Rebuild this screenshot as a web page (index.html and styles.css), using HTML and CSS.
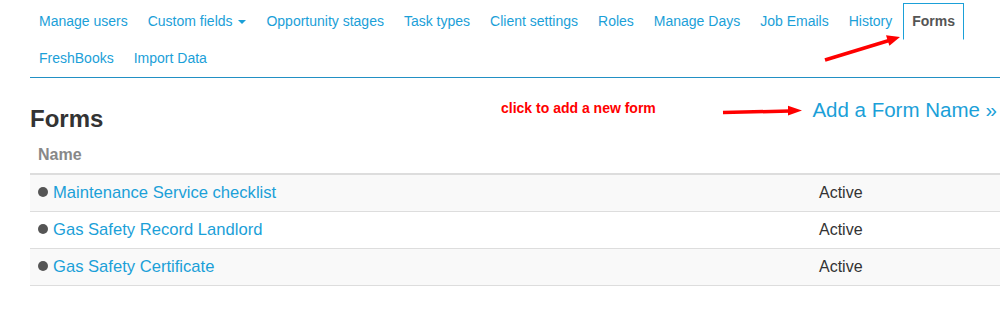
FILE: index.html
```html
<!DOCTYPE html>
<html lang="en">
<head>
    <meta charset="UTF-8">
    <meta name="viewport" content="width=device-width, initial-scale=1.0">
    <title>Forms</title>
    <link rel="stylesheet" href="styles.css">
</head>
<body>
    <div class="page">
        <ul class="nav-tabs">
            <li><a href="#">Manage users</a></li>
            <li><a href="#">Custom fields <span class="caret"></span></a></li>
            <li><a href="#">Opportunity stages</a></li>
            <li><a href="#">Task types</a></li>
            <li><a href="#">Client settings</a></li>
            <li><a href="#">Roles</a></li>
            <li><a href="#">Manage Days</a></li>
            <li><a href="#">Job Emails</a></li>
            <li><a href="#">History</a></li>
            <li class="active"><a href="#">Forms</a></li>
            <li><a href="#">FreshBooks</a></li>
            <li><a href="#">Import Data</a></li>
        </ul>

        <div class="heading-row">
            <h2>Forms</h2>
            <a href="#" class="add-link">Add a Form Name &raquo;</a>
        </div>

        <table class="forms-table">
            <thead>
                <tr>
                    <th class="col-name">Name</th>
                    <th></th>
                </tr>
            </thead>
            <tbody>
                <tr>
                    <td><span class="dot"></span><a href="#">Maintenance Service checklist</a></td>
                    <td>Active</td>
                </tr>
                <tr>
                    <td><span class="dot"></span><a href="#">Gas Safety Record Landlord</a></td>
                    <td>Active</td>
                </tr>
                <tr>
                    <td><span class="dot"></span><a href="#">Gas Safety Certificate</a></td>
                    <td>Active</td>
                </tr>
            </tbody>
        </table>
    </div>

    <!-- annotations drawn over the screenshot -->
    <div class="note">click to add a new form</div>
    <svg class="arrows" width="1004" height="320" viewBox="0 0 1004 320">
        <line x1="825" y1="60" x2="889" y2="40.5" stroke="#f00" stroke-width="3.5"/>
        <polygon points="900,37 889.4,45.8 886,35.2" fill="#f00"/>
        <line x1="723" y1="112.5" x2="790" y2="111" stroke="#f00" stroke-width="3.5"/>
        <polygon points="802,110.6 788,105.8 788,115.6" fill="#f00"/>
    </svg>
</body>
</html>
```

FILE: styles.css
```css
body {
    margin: 0;
    font-family: "Liberation Sans", Arial, sans-serif;
    color: #333;
    background: #fff;
}
a {
    color: #1ba0d8;
    text-decoration: none;
}

.page {
    width: 970px;
    margin-left: 30px;
    padding-top: 3px;
}

.nav-tabs {
    display: flex;
    flex-wrap: wrap;
    list-style: none;
    margin: 0;
    padding: 0;
    border-bottom: 1px solid #2290c4;
}
.nav-tabs li {
    margin-right: 2px;
}
.nav-tabs a {
    display: block;
    padding: 9px 8px;
    border: 1px solid transparent;
    font-size: 14px;
    line-height: 17px;
}
.nav-tabs .active a {
    border-color: #1ba0d8;
    border-bottom-color: transparent;
    color: #555;
    font-weight: bold;
}
.caret {
    display: inline-block;
    width: 0;
    height: 0;
    margin-left: 2px;
    vertical-align: middle;
    border-top: 4px solid #1ba0d8;
    border-left: 4px solid transparent;
    border-right: 4px solid transparent;
}

.heading-row {
    display: flex;
    justify-content: space-between;
    align-items: flex-start;
    margin-top: 20px;
}
.heading-row h2 {
    margin: 8px 0 0;
    font-size: 24px;
    line-height: 26px;
    font-weight: bold;
    color: #333;
}
.add-link {
    font-size: 20.5px;
    line-height: 24px;
    margin-right: 3px;
}

.forms-table {
    width: 100%;
    margin-top: 5px;
    border-collapse: collapse;
    font-size: 16px;
}
.forms-table th,
.forms-table td {
    padding: 8px;
    line-height: 20px;
    text-align: left;
}
.forms-table th {
    color: #888;
    font-weight: bold;
    border-bottom: 2px solid #ddd;
}
.forms-table .col-name {
    width: 765px;
}
.forms-table td {
    border-top: 1px solid #ddd;
    border-bottom: 1px solid #ddd;
    color: #333;
}
.forms-table tbody tr:nth-child(odd) {
    background: #f9f9f9;
}
.forms-table td a {
    font-size: 16.6px;
}
.dot {
    display: inline-block;
    width: 10px;
    height: 10px;
    margin-right: 5px;
    border-radius: 50%;
    background: #555;
    vertical-align: 1px;
}

.note {
    position: absolute;
    left: 501px;
    top: 100px;
    font-size: 14px;
    line-height: 16px;
    font-weight: bold;
    color: #f00;
}
.arrows {
    position: absolute;
    left: 0;
    top: 0;
    pointer-events: none;
}
```
